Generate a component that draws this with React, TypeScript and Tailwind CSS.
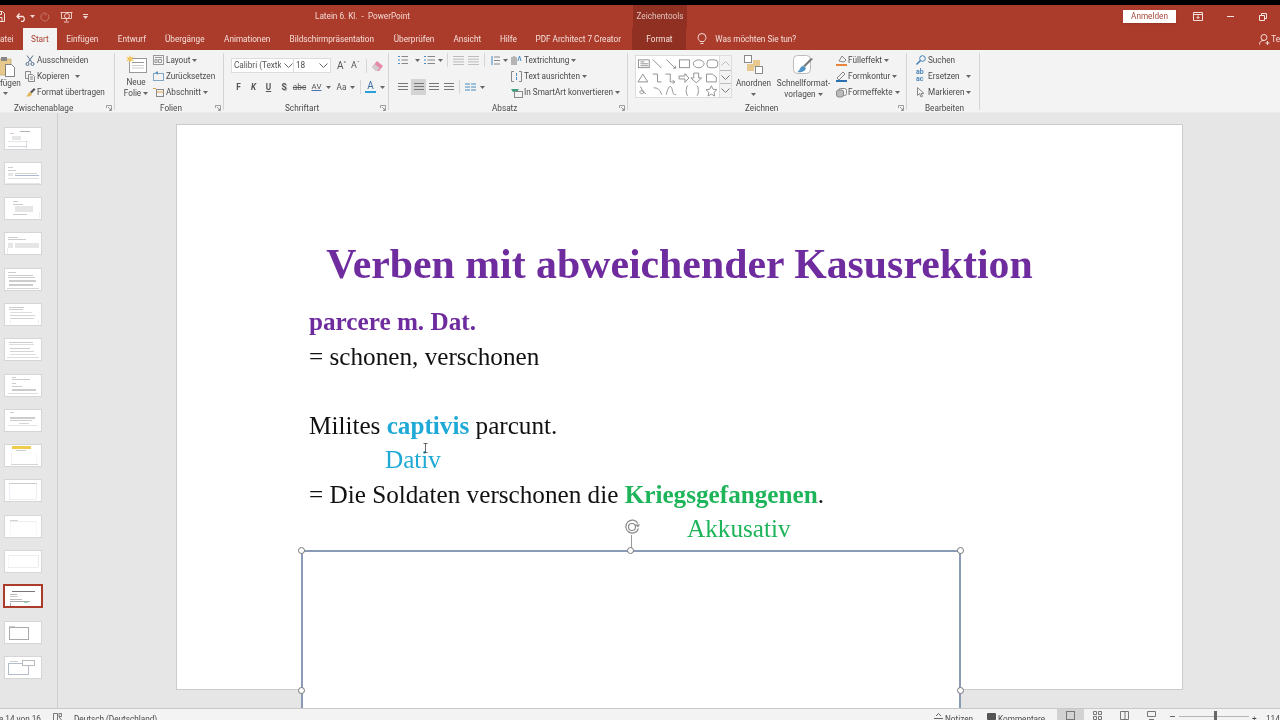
import React from "react";

const Caret = ({ c = "#666" }: { c?: string }) => (
  <svg width="5" height="3" viewBox="0 0 5 3" className="shrink-0"><path d="M0 0h5L2.5 3z" fill={c} /></svg>
);

const S = ({ children, w = 11, h = 11, vb }: { children: React.ReactNode; w?: number; h?: number; vb?: string }) => (
  <svg width={w} height={h} viewBox={vb ?? `0 0 ${w} ${h}`} fill="none" stroke="#666" strokeWidth="1" className="shrink-0">{children}</svg>
);

const Row = ({ icon, label, caret, gap, w = "w-[12px]" }: { icon: React.ReactNode; label: string; caret?: boolean; gap?: boolean; w?: string }) => (
  <div className="flex items-center h-[16px] whitespace-nowrap">
    <div className={`${w} flex items-center`}>{icon}</div>
    <span>{label}</span>
    {caret && <span className={gap ? "ml-[6px]" : "ml-[2px]"}><Caret /></span>}
  </div>
);

const Launcher = () => (
  <svg width="6" height="6" viewBox="0 0 6 6" fill="none" stroke="#888" strokeWidth="0.8" className="absolute right-[2px] top-[2px]"><path d="M.5 3V.5H5.500V5.500H3M2 2l3 3M3.500 5H5V3.500" /></svg>
);

const Group = ({ w, label, cx, children }: { w: string; label: string; cx: string; children: React.ReactNode }) => (
  <div className={`${w} h-[57px] border-r border-[#d4d4d4] shrink-0 flex flex-col`}>
    <div className="h-[49px] -mt-px flex shrink-0">{children}</div>
    <div className={`relative h-[11px] shrink-0 mt-[1.500px] leading-[11px] whitespace-nowrap ${cx}`}>
      {label}
      <Launcher />
    </div>
  </div>
);

const Divider = ({ m }: { m: string }) => <div className={`w-px h-[14px] bg-[#d6d6d6] ${m}`} />;

const lines = (y: number, n: number, dy: number, x = 0, w = 10, c = "#666") =>
  Array.from({ length: n }, (_, i) => <path key={i} d={`M${x} ${y + i * dy + 0.5}h${w}`} stroke={c} />);

const T = (x: number, y: number, w: number, h: number, c = "#9a9a9a") => ({ x, y, w, h, c });
const thumbs = [
  [T(15, 3, 10, 1, "#666"), T(5, 5, 4, 1, "#b9a"), T(7, 8, 9, 4), T(3, 13, 20, 1, "#ccc"), T(21, 13, 1, 7, "#6c86b8"), T(3, 18, 19, 1, "#aab")],
  [T(3, 4, 5, 1), T(3, 7, 8, 1), T(3, 10, 5, 3), T(10, 10, 22, 1, "#aaa"), T(10, 12, 24, 1, "#5b74a8"), T(3, 15, 31, 1, "#bbb"), T(1, 20, 34, 1, "#ccc")],
  [T(8, 3, 5, 1), T(8, 6, 10, 1), T(10, 8, 18, 6), T(8, 16, 14, 1), T(34, 14, 1, 6, "#bbb")],
  [T(3, 4, 10, 1), T(3, 6, 18, 1), T(3, 10, 5, 5), T(10, 10, 24, 5), T(2, 15, 1, 6, "#bbb")],
  [T(3, 3, 8, 1), T(3, 6, 25, 1), T(3, 8, 27, 1), T(4, 11, 27, 2), T(4, 15, 24, 2), T(2, 19, 32, 1, "#aaa")],
  [T(4, 3, 15, 1), T(4, 5, 14, 1), T(5, 8, 22, 1, "#bbb"), T(5, 11, 25, 1, "#aaa"), T(5, 14, 24, 1, "#aaa"), T(33, 16, 1, 4, "#bbb"), T(5, 16, 1, 4, "#bbb")],
  [T(4, 3, 24, 1), T(4, 5, 25, 1, "#bbb"), T(5, 9, 20, 1), T(5, 12, 24, 1, "#aaa"), T(5, 15, 26, 1, "#bbb"), T(2, 18, 32, 1, "#bbb")],
  [T(7, 2, 4, 1), T(7, 4, 18, 1), T(7, 8, 4, 1), T(7, 11, 10, 1), T(7, 14, 24, 2), T(3, 18, 30, 1, "#bbb")],
  [T(5, 2, 4, 1), T(5, 7, 25, 2), T(5, 10, 22, 1), T(14, 13, 10, 1, "#aaa"), T(3, 15, 30, 1, "#ccc")],
  [T(7, 1, 19, 3, "#eec63a"), T(11, 5, 10, 1, "#999"), T(6, 6, 1, 12, "#ccc"), T(6, 19, 27, 1, "#aaa"), T(31, 8, 1, 11, "#ddd")],
  [T(4, 3, 28, 1, "#999"), T(4, 3, 1, 16, "#b0bdd2"), T(31, 4, 1, 15, "#bbb"), T(4, 19, 28, 1, "#ddd")],
  [T(5, 4, 8, 1, "#aaa"), T(5, 5, 26, 1, "#ddd"), T(5, 5, 1, 14, "#ddd"), T(31, 5, 1, 14, "#ddd")],
  [T(3, 4, 30, 1, "#ddd"), T(3, 4, 1, 12, "#ddd"), T(33, 4, 1, 12, "#aaa"), T(3, 16, 30, 1, "#ddd")],
];

const Thumb = ({ d }: { d: { x: number; y: number; w: number; h: number; c: string }[] }) => (
  <svg width="36" height="21" viewBox="0 0 36 21" className="bg-white outline outline-1 outline-[#d6d6d6] shrink-0">
    {d.map((r, i) => <rect key={i} x={r.x} y={r.y} width={r.w} height={r.h} fill={r.c} opacity={r.c === "#eec63a" ? 0.9 : r.h > 2 ? 0.25 : 0.5} />)}
  </svg>
);

const Selected = () => (
  <div className="w-[40px] h-[24px] -mt-[2px] -mb-[1px] -ml-[2px] border-2 border-[#ab3c2c] bg-white shrink-0">
    <svg width="36" height="20" viewBox="0 0 36 20">
      <rect x="7" y="5" width="23" height="1" fill="#777" />
      <rect x="5" y="8" width="7" height="1" fill="#bbb" />
      <rect x="5" y="10" width="8" height="1" fill="#ccc" />
      <rect x="5" y="13" width="12" height="1" fill="#bbb" />
      <rect x="5" y="15" width="20" height="1" fill="#aaa" />
      <rect x="19" y="16" width="4" height="1" fill="#9db" />
      <rect x="5" y="17" width="1" height="3" fill="#9aa6c0" />
    </svg>
  </div>
);

const Thumb2 = () => (
  <svg width="36" height="21" viewBox="0 0 36 21" className="bg-white outline outline-1 outline-[#d6d6d6] shrink-0">
    <rect x="4" y="4" width="6" height="1" fill="#ccc" />
    <rect x="4.500" y="5.500" width="19" height="12" fill="none" stroke="#aaa" />
  </svg>
);
const Thumb3 = () => (
  <svg width="36" height="21" viewBox="0 0 36 21" className="bg-white outline outline-1 outline-[#d6d6d6] shrink-0">
    <rect x="5" y="4" width="8" height="1" fill="#ccc" />
    <rect x="3.500" y="6.500" width="20" height="11" fill="none" stroke="#b5bdcd" />
    <rect x="17.500" y="3.500" width="12" height="5" fill="#fff" stroke="#bbb" />
  </svg>
);

const Handle = ({ pos }: { pos: string }) => (
  <div className={`absolute w-[7px] h-[7px] rounded-full bg-white border border-[#777] ${pos}`} />
);

const Shapes = () => (
  <svg width="85" height="43" viewBox="0 0 85 43" fill="none" stroke="#777" strokeWidth="0.8">
    <rect x="2.500" y="3.500" width="11" height="8" />
    <path d="M4.500 5.500h4M4.500 7.500h8M4.500 9.500h8" />
    <path d="M17 3l9 9M31 3l9 9M38 12h2.500V9.500" />
    <rect x="44.500" y="3.500" width="10" height="8" />
    <ellipse cx="64" cy="7.500" rx="5.500" ry="4" />
    <rect x="72.500" y="3.500" width="11" height="8" rx="3" />
    <path d="M2 26l5-8 5 8zM17 18h5v8h4M30 18h5v8h4.500M37.500 24l2 2-2 2" />
    <path d="M44 20h6v-2.500l4 4.500-4 4.500V23h-6zM59 17h5v5h3l-5.500 5-5.500-5h3zM72 18h6l4 3v5H72z" />
    <path d="M4 31c3 1 1 3 3 4s1 3-1 3-3-2-1-3 3 3 5 3M18 32c4 0 7 2 8 7M31 39c2-10 5-10 6-5s2 5 4 5M53 30c-2 0-1 4-2 5 1 1 0 5 2 5M62 30c2 0 1 4 2 5-1 1 0 5-2 5" />
    <path d="M77 30l1.700 3.500 3.800.5-2.800 2.600.7 3.800-3.400-1.900-3.400 1.900.7-3.800-2.800-2.600 3.800-.5z" />
  </svg>
);

const Cursor = () => (
  <svg width="5" height="10" viewBox="0 0 5 10" className="absolute left-[246px] top-[318px]" fill="none" stroke="#444" strokeWidth="0.8"><path d="M.5.500h4M2.500.500v9M.5 9.500h4" /></svg>
);

export default function App() {
  return (
    <div className="w-[1280px] h-[720px] overflow-hidden flex flex-col bg-[#e6e6e6] font-['Roboto',sans-serif] text-[8.200px] text-[#4a4a4a] blur-[0.35px]">
      <div className="h-[5px] bg-black shrink-0" />
      {/* title bar */}
      <div className="h-[23px] bg-[#ab3c2c] flex items-center text-[#f2d8d2] shrink-0 relative">
        <div className="w-[288px] flex items-center -ml-[6px] shrink-0">
          <svg width="11" height="11" viewBox="0 0 11 11" fill="none" stroke="#f6e3df" strokeWidth="1"><path d="M.5.500h8l2 2v8H.5zM3 .5v3h4.500v-3M3 10.500v-4h5v4" /></svg>
          <svg width="11" height="10" viewBox="0 0 11 10" fill="none" stroke="#f6e3df" strokeWidth="1.300" className="ml-[11px]"><path d="M1 4.500h6a3 3 0 010 5H5M3.500 1.500L1 4.500l2.500 2.500" /></svg>
          <span className="ml-[3px]"><Caret c="#f2d8d2" /></span>
          <svg width="10" height="10" viewBox="0 0 10 10" fill="none" stroke="#c9776a" strokeWidth="1" className="ml-[5px]"><path d="M8 2.500a4 4 0 11-3-1.500M5 .5l1.500 1.500L5 3.500" /></svg>
          <svg width="13" height="12" viewBox="0 0 13 12" fill="none" stroke="#f2d8d2" strokeWidth="0.9" className="ml-[10px]"><path d="M.5 1.500h12M1.500 1.500v6h10v-6M6.500 8v2M4 11h5" /><circle cx="7" cy="5" r="2.500" /></svg>
          <span className="ml-[10px] border-t border-[#f2d8d2] pt-px"><Caret c="#f2d8d2" /></span>
        </div>
        <div className="ml-[33px] w-[324px] whitespace-nowrap">Latein 6. Kl.&nbsp; -&nbsp; PowerPoint</div>
        <div className="w-[54px] h-[23px] bg-[#8f3022] flex items-center justify-center text-[#e5c5bd] whitespace-nowrap ml-[-6px]">Zeichentools</div>
        <div className="ml-[436px] w-[53px] h-[13px] bg-white text-[#a8493a] flex items-center justify-center shadow-sm">Anmelden</div>
        <svg width="10" height="9" viewBox="0 0 10 9" fill="none" stroke="#f6e3df" className="ml-[17px]"><path d="M.5.500h9v8h-9zM.5 2.500h9M5 3.500v3M3.500 5L5 6.500 6.500 5" /></svg>
        <div className="w-[7px] h-px bg-[#f6e3df] ml-[24px]" />
        <svg width="8" height="8" viewBox="0 0 8 8" fill="none" stroke="#f6e3df" className="ml-[25px]"><path d="M2.500 2V.5h5v5H6M.5 2.500h5v5h-5z" /></svg>
      </div>
      {/* tabs */}
      <div className="h-[22px] bg-[#ab3c2c] flex items-center text-[#f5dfda] shrink-0 whitespace-nowrap">
        <div className="w-[23px] -ml-[10px] shrink-0 pr-[13px]" />
        <span className="-ml-[13px] w-[23px]">atei</span>
        <div className="w-[34px] h-[22px] bg-[#f3f3f3] text-[#a8402f] flex items-center justify-center">Start</div>
        <span className="ml-[9px] w-[33px] text-center">Einfügen</span>
        <span className="ml-[19px] w-[28px] text-center">Entwurf</span>
        <span className="ml-[19px] w-[40px] text-center">Übergänge</span>
        <span className="ml-[19px] w-[47px] text-center">Animationen</span>
        <span className="ml-[19px] w-[84px] text-center">Bildschirmpräsentation</span>
        <span className="ml-[20px] w-[41px] text-center">Überprüfen</span>
        <span className="ml-[19px] w-[27px] text-center">Ansicht</span>
        <span className="ml-[19px] w-[18px] text-center">Hilfe</span>
        <span className="ml-[18px] w-[85px] text-center">PDF Architect 7 Creator</span>
        <div className="ml-[12px] w-[54px] h-[22px] bg-[#8f3022] flex items-center justify-center">Format</div>
        <svg width="10" height="12" viewBox="0 0 10 12" fill="none" stroke="#f5dfda" className="ml-[11px]"><path d="M3 8.500C2 7 1 6 1 4.500a4 4 0 018 0C9 6 8 7 7 8.500zM3.500 10.500h3" /></svg>
        <span className="ml-[8px] w-[545px]">Was möchten Sie tun?</span>
        <svg width="11" height="11" viewBox="0 0 11 11" fill="none" stroke="#f5dfda"><circle cx="5" cy="3.500" r="3" /><path d="M.5 10.500c0-3 2-4 4.500-4M8.500 7v4M6.500 9h4" /></svg>
        <span className="ml-[1px]">Te</span>
      </div>
      {/* ribbon */}
      <div className="h-[63px] bg-[#f3f3f3] flex pt-[3px] shrink-0 border-b border-[#ececec]">
        <Group w="w-[115px]" label="Zwischenablage" cx="pl-[14px]">
          <div className="w-[25px] relative flex flex-col">
            <svg width="17" height="21" viewBox="0 0 17 21" className="-ml-[2px] mt-[4px]"><rect x="0" y="3" width="13" height="16" fill="#e7c98d" stroke="#b99a5e" strokeWidth="0.6" /><rect x="3" y="1" width="6" height="4" fill="#888" /><path d="M7.500 8.500h6l3 3v9h-9z" fill="#fff" stroke="#666" strokeWidth="0.8" /></svg>
            <span className="leading-[11px] mt-[1px]">fügen</span>
            <span className="ml-[3px] mt-[3px]"><Caret /></span>
          </div>
          <div className="flex flex-col">
            <Row label="Ausschneiden" icon={<S w={10} h={11}><path stroke="#55708f" d="M2 .5l5 7M8 .5l-5 7" /><circle cx="2.500" cy="9" r="1.500" stroke="#55708f" /><circle cx="7.500" cy="9" r="1.500" stroke="#55708f" /></S>} />
            <Row label="Kopieren" caret gap icon={<S w={10} h={11}><path stroke="#888" d="M.5.5h5v2M.5.5v7h3M3.500 3.500h4l2 2v5h-6zM5 6h3M5 8h3" /></S>} />
            <Row label="Format übertragen" icon={<S w={11} h={11}><path d="M5 5l4-4 1.500 1.500-4 4z" fill="#555" stroke="none" /><path d="M1 9c2 0 2-4 4-4l2 2c-1 3-4 3-6 2z" fill="#e3b861" stroke="none" /></S>} />
          </div>
        </Group>
        <Group w="w-[109px]" label="Folien" cx="pl-[45px]">
          <div className="w-[38px] pl-[4px] flex flex-col items-center leading-[11px] shrink-0">
            <svg width="21" height="19" viewBox="0 0 21 19" className="mt-[3px]" fill="none"><rect x="3.500" y="3.500" width="17" height="14" fill="#fff" stroke="#999" /><path d="M6 7.500h12" stroke="#999" /><path d="M6 10.500h12M6 13h12" stroke="#ccc" /><path d="M4 0l1 2.500L8 1.500 6 4l2 2.500-3-1L4 8 3 5.500 0 6.500 2 4 0 1.500l3 1z" fill="#f0c75e" /></svg>
            <span className="mt-[3px]">Neue</span>
            <span className="flex items-center gap-[2px]">Folie<Caret /></span>
          </div>
          <div className="flex flex-col">
            <Row w="w-[13px]" label="Layout" caret icon={<S w={11} h={10}><rect x=".5" y=".5" width="10" height="9" stroke="#999" /><path d="M2 2.500h7M2 4.500h2v3H2zM5.500 4.500h3v3h-3z" stroke="#999" /></S>} />
            <Row w="w-[13px]" label="Zurücksetzen" icon={<S w={11} h={10}><rect x=".5" y="2.500" width="10" height="7" stroke="#7fa6c6" /><path d="M2 1l3-.5V4z" fill="#5a91bd" stroke="none" /></S>} />
            <Row w="w-[13px]" label="Abschnitt" caret icon={<S w={11} h={10}><path d="M0 1.500h3" stroke="#e0a34f" /><rect x="3.500" y="2.500" width="7" height="7" stroke="#888" /><path d="M3.500 5h7" stroke="#e0a34f" /></S>} />
          </div>
        </Group>
        <Group w="w-[165px]" label="Schriftart" cx="pl-[61px]">
          <div className="pl-[7px] flex flex-col">
            <div className="flex items-center mt-[6px] h-[15px]">
              <div className="w-[63px] h-[15px] bg-white border border-[#dcdcdc] flex items-center pl-[2px] text-[#555] overflow-hidden whitespace-nowrap">
                <span className="w-[47px] overflow-hidden">Calibri (Textk</span>
                <svg width="9" height="5" viewBox="0 0 9 5" fill="none" stroke="#666" className="ml-[3px] shrink-0"><path d="M.5.500l4 4 4-4" /></svg>
              </div>
              <div className="w-[37px] h-[15px] bg-white border border-[#dcdcdc] border-l-0 flex items-center pl-[2px] justify-between pr-[2px]">
                <span>18</span>
                <svg width="9" height="5" viewBox="0 0 9 5" fill="none" stroke="#666"><path d="M.5.500l4 4 4-4" /></svg>
              </div>
              <span className="ml-[6px] text-[10px] text-[#555]">A</span>
              <span className="text-[6px] -mt-[6px] text-[#555]">^</span>
              <span className="ml-[5px] text-[9px] text-[#555]">A</span>
              <span className="text-[6px] -mt-[6px] text-[#555]">ˇ</span>
              <div className="ml-[6px]"><Divider m="" /></div>
              <svg width="11" height="10" viewBox="0 0 11 10" className="ml-[5px]"><path d="M5 0l6 5-4 5H4L0 6z" fill="#e58aa9" /><path d="M0 6l2.500-3 5 4L5 10H4z" fill="#cfcfcf" /></svg>
            </div>
            <div className="flex items-center h-[16px] mt-[6px] text-[#555]">
              <span className="w-[15px] text-center font-bold">F</span>
              <span className="w-[15px] text-center font-bold italic">K</span>
              <span className="w-[15px] text-center font-bold underline">U</span>
              <span className="w-[16px] text-center font-bold [text-shadow:1px_1px_0_#bbb]">S</span>
              <span className="w-[15px] text-center line-through">abc</span>
              <span className="w-[19px] text-center text-[8px] underline decoration-[#4a76b4]">AV</span>
              <Caret />
              <span className="ml-[4px] w-[13px] text-center">Aa</span>
              <span className="ml-[2px]"><Caret /></span>
              <div className="ml-[5px]"><Divider m="" /></div>
              <span className="ml-[4px] w-[11px] text-center text-[10px] leading-[10px] text-[#3a6ea5] border-b-2 border-[#2aa0d8]">A</span>
              <span className="ml-[4px]"><Caret /></span>
            </div>
          </div>
        </Group>
        <Group w="w-[239px]" label="Absatz" cx="pl-[103px]">
          <div className="w-[122px] pl-[9px] flex flex-col shrink-0">
            <div className="flex items-center h-[16px]">
              <S w={10} h={10}><path d="M0 1.500h2M0 5h2M0 8.500h2" stroke="#4a8cc2" /><path d="M3.500 1.500H10M3.500 5H10M3.500 8.500H10" stroke="#888" /></S>
              <span className="ml-[7px]"><Caret /></span>
              <span className="ml-[4px]"><S w={11} h={10}><path d="M0 1.500h2M0 5h2M0 8.500h2" stroke="#4a8cc2" /><path d="M3.500 1.500H11M3.500 5H11M3.500 8.500H11" stroke="#888" /></S></span>
              <span className="ml-[3px]"><Caret /></span>
              <div className="ml-[4px]"><Divider m="" /></div>
              <span className="ml-[5px]"><S w={11} h={9}><g stroke="#bbb">{lines(0, 4, 2.7, 0, 11, "#bbb")}</g></S></span>
              <span className="ml-[4px]"><S w={11} h={9}><g stroke="#bbb">{lines(0, 4, 2.7, 0, 11, "#bbb")}</g></S></span>
              <div className="ml-[5px]"><Divider m="" /></div>
              <span className="ml-[5px]"><S w={10} h={11}><path d="M2 1v9" stroke="#3f87c0" /><path d="M4 2h6M4 5.500h6M4 9h6" stroke="#888" /></S></span>
              <span className="ml-[3px]"><Caret /></span>
            </div>
            <div className="flex items-center h-[16px] mt-[11px]">
              <S w={10} h={8}>{lines(0, 3, 3, 0, 10, "#777")}</S>
              <div className="ml-[3px] w-[15px] h-[16px] bg-[#d4d4d4] flex items-center justify-center"><S w={10} h={8}>{lines(0, 3, 3, 0, 10, "#777")}</S></div>
              <span className="ml-[3px]"><S w={10} h={8}>{lines(0, 3, 3, 0, 10, "#777")}</S></span>
              <span className="ml-[5px]"><S w={10} h={8}>{lines(0, 3, 3, 0, 10, "#777")}</S></span>
              <div className="ml-[5px]"><Divider m="" /></div>
              <span className="ml-[5px]"><S w={11} h={8}><path d="M0 1h5M6 1h5M0 4h5M6 4h5M0 7h5M6 7h5" stroke="#4a8cc2" /></S></span>
              <span className="ml-[4px]"><Caret /></span>
            </div>
          </div>
          <div className="flex flex-col">
            <Row w="w-[13px]" label="Textrichtung" caret icon={<S w={11} h={11}><path d="M1 2v8M3 1v9M5 2v8" stroke="#777" /><path d="M7 6l1.500-5L10 6" stroke="#4a8cc2" /></S>} />
            <Row w="w-[13px]" label="Text ausrichten" caret icon={<S w={11} h={11}><path d="M3 .5H.5v10H3M8 .5h2.500v10H8" stroke="#888" /><path d="M5.500 2v3M5.500 6v3" stroke="#4a8cc2" /></S>} />
            <Row w="w-[13px]" label="In SmartArt konvertieren" caret icon={<S w={12} h={11}><path d="M0 2h8l-2 3H2z" fill="#3d9e7d" stroke="none" /><rect x="3.500" y="4.500" width="8" height="6" stroke="#888" /></S>} />
          </div>
        </Group>
        <Group w="w-[279px]" label="Zeichnen" cx="pl-[117px]">
          <div className="pl-[7px] pt-[3px] flex shrink-0">
            <div className="w-[97px] h-[43px] flex bg-white border border-[#dcdcdc]">
              <Shapes />
              <div className="w-[12px] flex flex-col border-l border-[#dcdcdc] bg-[#f3f3f3]">
                <div className="h-[14px] flex items-center justify-center"><svg width="9" height="5" fill="none" stroke="#bbb" viewBox="0 0 9 5"><path d="M.5 4.500l4-4 4 4" /></svg></div>
                <div className="h-[14px] flex items-center justify-center border-y border-[#bbb]"><svg width="9" height="5" fill="none" stroke="#777" viewBox="0 0 9 5"><path d="M.5.500l4 4 4-4" /></svg></div>
                <div className="h-[13px] flex items-center justify-center"><svg width="9" height="5" fill="none" stroke="#777" viewBox="0 0 9 5"><path d="M.5.500l4 4 4-4" /></svg></div>
              </div>
            </div>
          </div>
          <div className="w-[41px] flex flex-col items-center leading-[11px] shrink-0 ml-px">
            <svg width="19" height="19" viewBox="0 0 19 19" className="mt-[3px]"><rect x="9" y="5" width="7" height="7" fill="#e7c98d" /><rect x="3" y="9" width="7" height="7" fill="#e7c98d" /><rect x=".5" y=".5" width="7" height="7" fill="#fff" stroke="#888" /><rect x="11.500" y="11.500" width="7" height="7" fill="#fff" stroke="#888" /></svg>
            <span className="mt-[4px]">Anordnen</span>
            <span className="mt-[4px]"><Caret /></span>
          </div>
          <div className="w-[59px] flex flex-col items-center leading-[11px] shrink-0">
            <svg width="21" height="20" viewBox="0 0 21 20" className="mt-[3px]" fill="none"><rect x=".5" y=".5" width="17" height="18" rx="4" fill="#fff" stroke="#bbb" /><path d="M20 4l-8 8-2-1 8-8z" fill="#777" /><path d="M10 11l3 2c-1 4-6 5-9 4 3-1 3-6 6-6z" fill="#4f93c6" /></svg>
            <span className="mt-[3px] whitespace-nowrap">Schnellformat-</span>
            <span className="flex items-center gap-[2px]">vorlagen<Caret /></span>
          </div>
          <div className="flex flex-col ml-[3px]">
            <Row label="Fülleffekt" caret icon={<S w={11} h={11}><path d="M3 6l3-5 4 4-2 2z" stroke="#888" /><path d="M0 9h11v2H0z" fill="#e8843c" stroke="none" /></S>} />
            <Row label="Formkontur" caret icon={<S w={11} h={11}><path d="M1 7L7 1l2 2-6 6z" stroke="#888" /><path d="M0 9h11v2H0z" fill="#2a6fb0" stroke="none" /></S>} />
            <Row label="Formeffekte" caret icon={<S w={11} h={11}><rect x="2.500" y="1.500" width="8" height="7" rx="2" stroke="#888" /><rect x="0.500" y="3" width="7" height="7" rx="2" fill="#bbb" stroke="#888" /></S>} />
          </div>
        </Group>
        <Group w="w-[73px]" label="Bearbeiten" cx="pl-[18px] [&>svg]:hidden">
          <div className="pl-[9px] flex flex-col">
            <Row label="Suchen" icon={<S w={10} h={10}><circle cx="6.500" cy="3.500" r="2.800" stroke="#3f7fb8" /><path d="M4.500 5.500L.5 9.500" stroke="#3f7fb8" strokeWidth="1.400" /></S>} />
            <Row label="Ersetzen" caret gap icon={<span className="text-[7px] leading-[7px] text-[#3f7fb8] font-semibold">ab<br />ac</span>} />
            <Row label="Markieren" caret icon={<S w={9} h={11}><path d="M1.500.5v8l2-2 1.500 3.500 1.500-.7L5 6.500h3z" stroke="#888" /></S>} />
          </div>
        </Group>
      </div>
      {/* workspace */}
      <div className="flex-1 min-h-0 flex overflow-hidden">
        <div className="w-[58px] border-r border-[#cfcfcf] pl-[5px] pt-[14.500px] flex flex-col gap-[14.300px] shrink-0">
          {thumbs.map((d, i) => <Thumb key={i} d={d} />)}
          <Selected />
          <Thumb2 />
          <Thumb3 />
        </div>
        <div className="flex-1 pl-[118px] pt-[11px]">
          <div className="relative w-[1007px] h-[566px] bg-white border border-[#cbcbcb] font-['Liberation_Serif',serif] text-[25.200px] leading-[34.500px] text-[#111]">
            <div className="pt-[115px] text-center text-[41.800px] leading-[48px] font-bold text-[#6f2c9f]">Verben mit abweichender Kasusrektion</div>
            <div className="pl-[132px] mt-[17px]">
              <div className="font-bold text-[#6f2c9f]">parcere m. Dat.</div>
              <div>= schonen, verschonen</div>
              <div className="h-[34.500px]" />
              <div>Milites <span className="font-bold text-[#1fa9d6]">captivis</span> parcunt.</div>
              <div className="pl-[76px] text-[#1fa9d6]">Dativ</div>
              <div>= Die Soldaten verschonen die <span className="font-bold text-[#1eb45a]">Kriegsgefangenen</span>.</div>
              <div className="pl-[378px] text-[#1eb45a]">Akkusativ</div>
            </div>
            <Cursor />
            <div className="absolute left-[124px] top-[425px] w-[660px] h-[279px] bg-white border-2 border-[#8c9bb5]">
              <div className="absolute left-[327.500px] -top-[17px] w-px h-[16px] bg-[#999]" />
              <svg width="18" height="16" viewBox="0 0 18 16" fill="none" stroke="#8a8a8a" strokeWidth="1.200" className="absolute left-[321px] -top-[33px]"><path d="M14 4.500a6.500 6.500 0 10.500 5" /><circle cx="8" cy="8" r="3.500" /><path d="M11 5.500h5l-2 3z" fill="#8a8a8a" stroke="none" /></svg>
              <Handle pos="-left-[5px] -top-[5px]" />
              <Handle pos="left-[324px] -top-[5px]" />
              <Handle pos="-right-[5px] -top-[5px]" />
              <Handle pos="-left-[5px] top-[135px]" />
              <Handle pos="-right-[5px] top-[135px]" />
            </div>
          </div>
        </div>
      </div>
      {/* status bar */}
      <div className="h-[12px] bg-[#f3f3f3] border-t border-[#c9c9c9] flex items-start shrink-0 overflow-hidden whitespace-nowrap leading-[14px] pt-[3px] [&>*]:shrink-0">
        <span className="w-[53px] -ml-[1px] mr-[-2px]">e 14 von 16</span>
        <svg width="9" height="8" viewBox="0 0 9 8" fill="none" stroke="#777" className="ml-[3px] mt-[1px]"><path d="M.5.500h4v7h-4zM6 .5h2.500v3H6zM6 4l2.500 3" /></svg>
        <span className="ml-[12px] w-[860px]">Deutsch (Deutschland)</span>
        <svg width="9" height="8" viewBox="0 0 9 8" fill="none" stroke="#666" className="mt-[1px]"><path d="M0 5.500h9M0 7.500h9M2 3l2.500-2.500L7 3" /></svg>
        <span className="ml-[2px] w-[28px]">Notizen</span>
        <div className="ml-[14px] w-[9px] h-[7px] mt-[1px] rounded-[1px] bg-[#555]" />
        <span className="ml-[2px] w-[44px]">Kommentare</span>
        <div className="ml-[15px] w-[27px] h-[12px] -mt-[3px] bg-[#d2d2d2] flex justify-center pt-[2px]"><div className="w-[9px] h-[9px] border border-[#777]" /></div>
        <svg width="9" height="9" viewBox="0 0 9 9" fill="none" stroke="#777" className="ml-[9px] -mt-[1px]"><path d="M.5.500h3v3h-3zM5.500.5h3v3h-3zM.5 5.500h3v3h-3zM5.500 5.500h3v3h-3z" /></svg>
        <svg width="9" height="9" viewBox="0 0 9 9" fill="none" stroke="#777" className="ml-[18px] -mt-[1px]"><path d="M.5.500h8v8h-8zM5 .5v8" /></svg>
        <svg width="9" height="9" viewBox="0 0 9 9" fill="none" stroke="#777" className="ml-[18px] -mt-[1px]"><path d="M.5.500h8v5h-8zM2 8.500h5" /></svg>
        <div className="ml-[14px] w-[5px] h-px bg-[#666] mt-[4px]" />
        <div className="ml-[4px] w-[70px] h-px bg-[#b5b5b5] mt-[4px] relative"><div className="absolute left-[35px] -top-[5px] w-[3px] h-[10px] bg-[#666]" /></div>
        <span className="ml-[3px] w-[5px]">+</span>
        <span className="ml-[9px]">114</span>
      </div>
    </div>
  );
}
